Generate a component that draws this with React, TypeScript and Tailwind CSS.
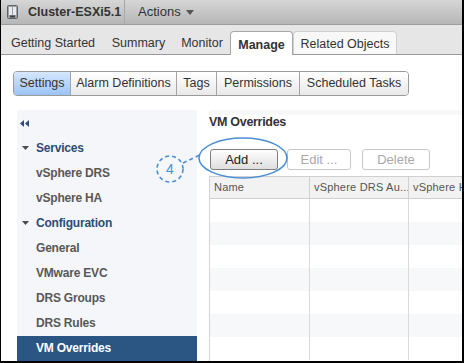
import React from "react";

const font = { fontFamily: '"Liberation Sans", Arial, sans-serif' };

// small cluster glyph in the title bar
const ClusterIcon = () => (
  <svg width="11" height="14" viewBox="0 0 11 14">
    <rect x="0.5" y="0.5" width="10" height="13" rx="1" fill="#9aa0a6" stroke="#5f6368" />
    <rect x="2" y="2" width="3" height="8" fill="#e8eaed" />
    <rect x="6" y="2" width="3" height="8" fill="#e8eaed" />
    <rect x="3" y="10.5" width="5" height="2" fill="#3c4043" />
  </svg>
);

const subTabs = [
  { label: "Settings", w: "w-[56px]" },
  { label: "Alarm Definitions", w: "w-[106px]" },
  { label: "Tags", w: "w-[40px]" },
  { label: "Permissions", w: "w-[83px]" },
  { label: "Scheduled Tasks", w: "w-[109px]" },
];

type NavItem = { label: string; kind: "group" | "item"; active?: boolean };
const nav: NavItem[] = [
  { label: "Services", kind: "group" },
  { label: "vSphere DRS", kind: "item" },
  { label: "vSphere HA", kind: "item" },
  { label: "Configuration", kind: "group" },
  { label: "General", kind: "item" },
  { label: "VMware EVC", kind: "item" },
  { label: "DRS Groups", kind: "item" },
  { label: "DRS Rules", kind: "item" },
  { label: "VM Overrides", kind: "item", active: true },
];

export default function App() {
  return (
    <div
      style={font}
      className="relative w-[464px] h-[363px] overflow-hidden bg-white border-l border-r-2 border-b-2 border-black flex flex-col"
    >
      {/* ── title bar ── */}
      <div className="h-[25px] shrink-0 flex items-center bg-gradient-to-b from-[#d6d6d6] to-[#b6b6b6] border-b border-[#9c9c9c]">
        <div className="w-[124px] pl-[6px] flex items-center gap-[10px] h-full border-r border-[#a8a8a8]">
          <ClusterIcon />
          <span className="text-[12.5px] font-bold text-[#333] whitespace-nowrap">Cluster-ESXi5.1</span>
        </div>
        <div className="pl-[13px] flex items-center gap-[5px] text-[13px] text-[#333]">
          Actions
          <svg width="8" height="5" viewBox="0 0 8 5"><path d="M0 0h8L4 5z" fill="#555" /></svg>
        </div>
      </div>

      {/* ── main tabs ── */}
      <div className="h-[30px] shrink-0 bg-[#e6e6e6] border-b border-[#9a9a9a] flex items-end pl-[2px] text-[12.5px] leading-[14px] text-[#333]">
        <div className="w-[100px] text-center pb-[4px]">Getting Started</div>
        <div className="w-[71px] text-center pb-[4px]">Summary</div>
        <div className="w-[56px] text-center pb-[4px]">Monitor</div>
        <div className="w-[63px] h-[24px] -mb-px bg-white border border-b-0 border-[#a8a8a8] rounded-t-[4px] flex items-center justify-center font-bold pt-[2px]">
          Manage
        </div>
        <div className="w-[104px] h-[23px] bg-[#f8f8f8] border border-b-0 border-[#cfcfcf] rounded-t-[4px] flex items-center justify-center pt-[2px]">
          Related Objects
        </div>
      </div>

      {/* ── sub tabs ── */}
      <div className="pt-[15px] pl-[12px] shrink-0">
        <div className="inline-flex h-[25px] border border-[#9a9a9a] rounded-[4px] overflow-hidden text-[12.5px] text-[#333]">
          {subTabs.map((t, i) => (
            <div
              key={t.label}
              className={
                i === 0
                  ? `${t.w} shrink-0 flex items-center justify-center whitespace-nowrap bg-gradient-to-b from-[#d6e7fd] to-[#9cc3f4]`
                  : `${t.w} shrink-0 flex items-center justify-center whitespace-nowrap bg-gradient-to-b from-white to-[#e9e9e9] border-l border-[#a5a5a5]`
              }
            >
              {t.label}
            </div>
          ))}
        </div>
      </div>

      {/* ── body ── */}
      <div className="flex flex-1 pt-[14px] pl-[16px] min-h-0">
        {/* left nav */}
        <div className="w-[180px] shrink-0 bg-[#f5f6f9] flex flex-col pt-[8px]">
          <div className="pl-[3px] h-[12px] flex items-center">
            <svg width="10" height="7" viewBox="0 0 10 7">
              <path d="M4 0v7L0 3.5z M9 0v7L5 3.5z" fill="#2c4f7c" />
            </svg>
          </div>
          <div className="mt-[6px] flex flex-col text-[12px] font-bold tracking-[-0.2px]">
            {nav.map((n) =>
              n.kind === "group" ? (
                <div key={n.label} className="h-[25px] flex items-center pl-[5px] gap-[7px] text-[#2b4d76]">
                  <svg width="7" height="4" viewBox="0 0 7 4"><path d="M0 0h7L3.5 4z" fill="#4a4a4a" /></svg>
                  {n.label}
                </div>
              ) : (
                <div
                  key={n.label}
                  className={
                    n.active
                      ? "h-[25px] flex items-center pl-[19px] bg-[#2b5583] text-white"
                      : "h-[25px] flex items-center pl-[19px] text-[#585858]"
                  }
                >
                  {n.label}
                </div>
              )
            )}
          </div>
        </div>

        {/* right panel */}
        <div className="flex-1 pl-[12px] flex flex-col min-w-0">
          <div className="h-[5px] bg-[#f7f8fa]" />
          <div className="h-[14px] flex items-center text-[12.5px] font-bold text-[#333] tracking-[-0.3px]">VM Overrides</div>
          <div className="mt-[20px] flex gap-[9px] text-[13px] pl-px">
            <div className="w-[68px] h-[21px] rounded-[3px] border border-[#7f7f7f] bg-gradient-to-b from-white to-[#dedede] flex items-center justify-center text-[#222]">
              Add ...
            </div>
            <div className="w-[64px] h-[21px] rounded-[3px] border border-[#c8c8c8] bg-white flex items-center justify-center text-[#a9a9a9]">
              Edit ...
            </div>
            <div className="ml-[2px] w-[68px] h-[21px] rounded-[3px] border border-[#c8c8c8] bg-white flex items-center justify-center text-[#a9a9a9]">
              Delete
            </div>
          </div>

          {/* table */}
          <div className="mt-[6px] border-l border-[#d4d4d4] flex-1 flex flex-col">
            <div className="h-[23px] shrink-0 flex bg-[#f2f2f2] border-t border-b border-[#d0d0d0] text-[11px] text-[#555] tracking-[0.2px]">
              <div className="w-[100px] shrink-0 px-[4px] flex items-center border-r border-[#d0d0d0]">Name</div>
              <div className="w-[99px] shrink-0 px-[4px] flex items-center border-r border-[#d0d0d0] whitespace-nowrap overflow-hidden">vSphere DRS Au...</div>
              <div className="flex-1 px-[4px] flex items-center whitespace-nowrap overflow-hidden">vSphere HA</div>
            </div>
            {[0, 1, 2, 3, 4, 5, 6].map((r) => (
              <div key={r} className={r % 2 === 1 ? "h-[23px] shrink-0 flex bg-[#f7f8fa]" : "h-[23px] shrink-0 flex bg-white"}>
                <div className="w-[100px] shrink-0 border-r border-[#dadada]" />
                <div className="w-[99px] shrink-0 border-r border-[#dadada]" />
                <div className="flex-1" />
              </div>
            ))}
          </div>
        </div>
      </div>

      {/* ── callout annotation ── */}
      <svg className="absolute left-0 top-0 pointer-events-none" width="464" height="363">
        <ellipse cx="242" cy="158" rx="44" ry="20" fill="none" stroke="#4a8fd6" strokeWidth="1.6" />
        <circle cx="169" cy="169" r="13" fill="none" stroke="#4a8fd6" strokeWidth="1.6" strokeDasharray="4 3" />
        <path d="M182 163 L199 155" stroke="#4a8fd6" strokeWidth="1.6" strokeDasharray="4 3" />
        <text x="169" y="174" textAnchor="middle" fontSize="14" fill="#4a8fd6" style={font}>4</text>
      </svg>
    </div>
  );
}
